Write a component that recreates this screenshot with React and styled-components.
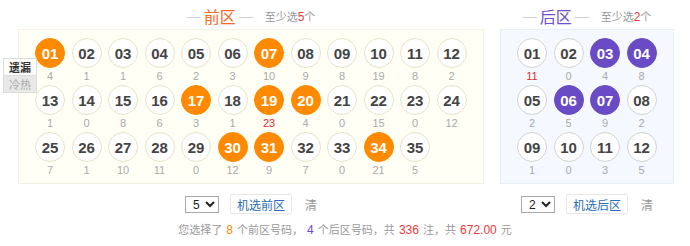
import React from 'react'
import styled, { createGlobalStyle } from 'styled-components'

const GlobalStyle = createGlobalStyle`
  body {
    margin: 0;
    background: #fff;
    font-family: "Liberation Sans", "Noto Sans CJK SC", sans-serif;
  }
`

const front = {
  picked: [1, 7, 17, 19, 20, 30, 31, 34],
  miss: [4, 1, 1, 6, 2, 3, 10, 9, 8, 19, 8, 2, 1, 0, 8, 6, 3, 1, 23, 4, 0, 15, 0, 12, 7, 1, 10, 11, 0, 12, 9, 7, 0, 21, 5],
  hot: [19],
}
const back = {
  picked: [3, 4, 6, 7],
  miss: [11, 0, 4, 8, 2, 5, 9, 2, 1, 0, 3, 5],
  hot: [1],
}

const pad = (n) => String(n).padStart(2, '0')

const Page = styled.div`
  width: 690px;
  position: relative;
`

const Zones = styled.div`
  display: flex;
  gap: 16px;
  padding-left: 18px;
`

const Zone = styled.div`
  width: ${(p) => p.$w}px;
  display: flex;
  flex-direction: column;
`

const Header = styled.div`
  height: 29px;
  display: flex;
  align-items: center;
  justify-content: center;
  padding-top: 2px;
  box-sizing: border-box;
`

const Dash = styled.span`
  color: #cfcfcf;
  font-size: 14px;
`

const Title = styled.span`
  color: ${(p) => p.$color};
  font-size: 16px;
  margin: 0 3px;
`

const Hint = styled.span`
  color: #999;
  font-size: 11px;
  margin-left: 12px;
  em {
    font-style: normal;
    color: #e83a3a;
    font-size: 12px;
  }
`

const Panel = styled.div`
  border: 1px solid ${(p) => p.$border};
  background: ${(p) => p.$bg};
  padding: 8px 0 4px 16px;
  display: grid;
  grid-template-columns: repeat(${(p) => p.$cols}, 30px);
  column-gap: 6.5px;
`

const Cell = styled.div`
  display: flex;
  flex-direction: column;
  align-items: center;
`

const Ball = styled.div`
  width: 30px;
  height: 30px;
  box-sizing: border-box;
  border-radius: 50%;
  border: 1px solid ${(p) => (p.$on ? p.$color : p.$ring)};
  background: ${(p) => (p.$on ? p.$color : '#fff')};
  color: ${(p) => (p.$on ? '#fff' : '#444')};
  font-weight: bold;
  font-size: 15px;
  display: flex;
  align-items: center;
  justify-content: center;
`

const Miss = styled.div`
  height: 17px;
  line-height: 17px;
  font-size: 11px;
  color: ${(p) => (p.$hot ? '#e02a2a' : '#aaa')};
`

const Controls = styled.div`
  display: flex;
  align-items: center;
  justify-content: center;
  margin-top: 10px;
  height: 20px;
`

const Select = styled.select`
  width: 34px;
  height: 17px;
  font-size: 12px;
  padding: 0 0 0 3px;
  border: 1px solid #a9a9a9;
  border-radius: 0;
  background: #fff;
  color: #222;
  font-family: "Liberation Sans", sans-serif;
`

const RandBtn = styled.button`
  margin-left: 11px;
  height: 20px;
  padding: 0 6px;
  border: 1px solid #e8e8e8;
  border-radius: 2px;
  background: #fff;
  color: #2c6db5;
  font-size: 12px;
  font-family: "Noto Sans CJK SC", sans-serif;
`

const Clear = styled.span`
  margin-left: 13px;
  font-size: 12px;
  color: #999;
`

const Summary = styled.div`
  margin-top: 7px;
  text-align: center;
  font-size: 11px;
  color: #999;
  word-spacing: 1px;
`

const Num = styled.span`
  font-size: 12px;
  color: ${(p) => p.$c};
`

const Tabs = styled.div`
  position: absolute;
  left: 3px;
  top: 58px;
  width: 34px;
  font-size: 11px;
  font-family: "Noto Sans CJK SC", sans-serif;
`

const Tab = styled.div`
  height: 16px;
  line-height: 16px;
  text-align: center;
  color: ${(p) => (p.$active ? '#333' : '#aaa')};
  font-weight: ${(p) => (p.$active ? 'bold' : 'normal')};
  background: ${(p) => (p.$active ? '#fff' : '#e8e8e8')};
  border: 1px solid #ddd;
  border-bottom: ${(p) => (p.$active ? 'none' : '1px solid #ddd')};
`

function BallZone({ count, cols, data, color, ring, border, bg }) {
  return (
    <Panel $cols={cols} $border={border} $bg={bg}>
      {Array.from({ length: count }, (_, i) => i + 1).map((n) => (
        <Cell key={n}>
          <Ball $on={data.picked.includes(n)} $color={color} $ring={ring}>{pad(n)}</Ball>
          <Miss $hot={data.hot.includes(n)}>{data.miss[n - 1]}</Miss>
        </Cell>
      ))}
    </Panel>
  )
}

export default function App() {
  return (
    <Page>
      <GlobalStyle />
      <Zones>
        <Zone $w={466}>
          <Header>
            <Dash>—</Dash>
            <Title $color="#f46b25">前区</Title>
            <Dash>—</Dash>
            <Hint>至少选<em>5</em>个</Hint>
          </Header>
          <BallZone count={35} cols={12} data={front} color="#ff8a00" ring="#e6e2c8" border="#f4f2e2" bg="#fffff6" />
          <Controls>
            <Select defaultValue="5">
              {[5, 6, 7, 8, 9, 10].map((v) => <option key={v}>{v}</option>)}
            </Select>
            <RandBtn>机选前区</RandBtn>
            <Clear>清</Clear>
          </Controls>
        </Zone>
        <Zone $w={174}>
          <Header>
            <Dash>—</Dash>
            <Title $color="#6d52c9">后区</Title>
            <Dash>—</Dash>
            <Hint>至少选<em>2</em>个</Hint>
          </Header>
          <BallZone count={12} cols={4} data={back} color="#6a4bc6" ring="#d2d2d2" border="#e6eef8" bg="#f5f9ff" />
          <Controls>
            <Select defaultValue="2">
              {[2, 3, 4, 5, 6].map((v) => <option key={v}>{v}</option>)}
            </Select>
            <RandBtn>机选后区</RandBtn>
            <Clear>清</Clear>
          </Controls>
        </Zone>
      </Zones>
      <Summary>
        您选择了 <Num $c="#ff8a00">8</Num> 个前区号码， <Num $c="#6a4bc6">4</Num> 个后区号码，共 <Num $c="#e83a3a">336</Num> 注，共 <Num $c="#e83a3a">672.00</Num> 元
      </Summary>
      <Tabs>
        <Tab $active>遗漏</Tab>
        <Tab>冷热</Tab>
      </Tabs>
    </Page>
  )
}
